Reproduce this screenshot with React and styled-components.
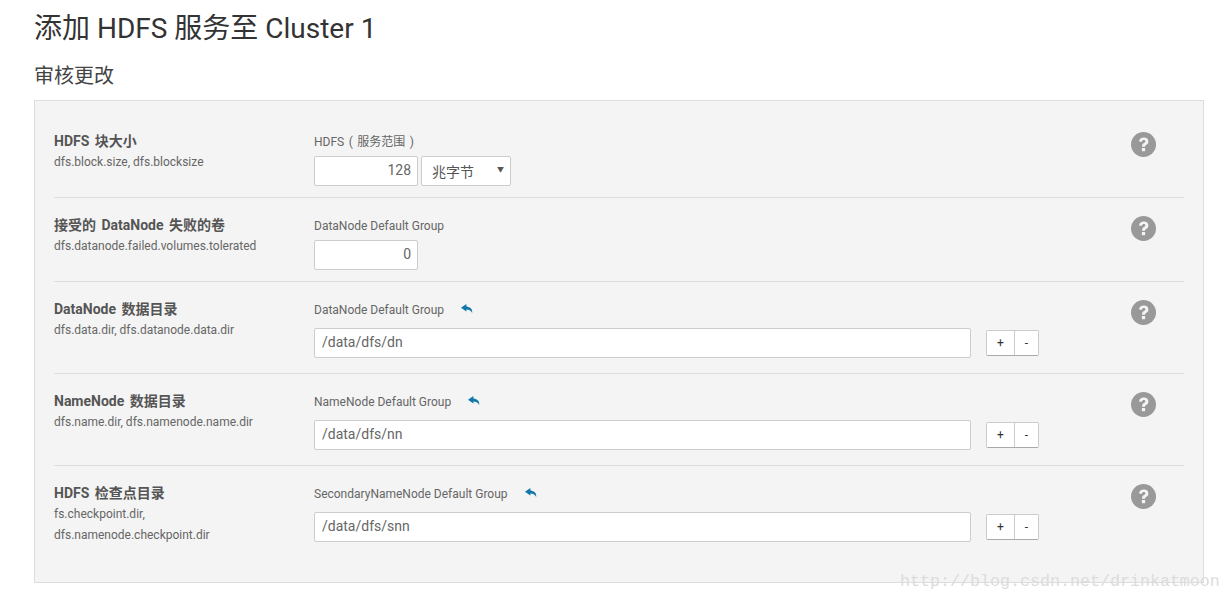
import styled, { createGlobalStyle } from "styled-components";

const GlobalStyle = createGlobalStyle`
  html, body {
    margin: 0;
    padding: 0;
    background: #fff;
  }
  body {
    font-family: Roboto, "Noto Sans CJK SC", sans-serif;
    color: #555;
  }
`;

const Page = styled.div`
  position: relative;
  width: 1231px;
  height: 601px;
  padding: 0 27px 0 34px;
  box-sizing: border-box;
  overflow: hidden;
`;

const Title = styled.h1`
  margin: 0;
  padding-top: 11px;
  height: 46px;
  font-size: 28px;
  line-height: 36px;
  font-weight: 400;
  color: #333;
`;

const Subtitle = styled.h2`
  margin: 0;
  height: 43px;
  font-size: 20px;
  line-height: 38px;
  font-weight: 400;
  color: #444;
`;

const Panel = styled.div`
  height: 483px;
  box-sizing: border-box;
  padding: 13px 19px 0;
  background: #f4f4f4;
  border: 1px solid #ddd;
`;

const Row = styled.div`
  display: grid;
  grid-template-columns: 260px 817px 53px;
  height: ${(p) => p.$height}px;
  box-sizing: border-box;
  padding-top: 17px;
  border-bottom: ${(p) => (p.$last ? "none" : "1px solid #ddd")};
`;

const Name = styled.div`
  font-size: 14px;
  line-height: 20px;
  font-weight: 700;
  word-spacing: 2px;
  color: #555;
`;

const Keys = styled.div`
  margin-top: 1px;
  font-size: 12px;
  line-height: 21px;
  color: #666;
`;

const GroupLabel = styled.div`
  display: flex;
  align-items: center;
  gap: 17px;
  height: 22px;
  font-size: 12px;
  color: #666;
`;

const ScopeLabel = styled(GroupLabel)`
  height: 18px;
  word-spacing: 1.5px;
`;

const Controls = styled.div`
  display: flex;
  align-items: flex-start;
  gap: 3px;
  margin-top: ${(p) => p.$gap}px;
`;

const NumberInput = styled.div`
  width: 104px;
  height: 30px;
  box-sizing: border-box;
  padding-right: 6px;
  background: #fff;
  border: 1px solid #ccc;
  border-radius: 2px;
  font-size: 14px;
  line-height: 26px;
  text-align: right;
  color: #666;
`;

const Select = styled.div`
  display: flex;
  align-items: center;
  justify-content: space-between;
  width: 90px;
  height: 30px;
  box-sizing: border-box;
  padding: 0 6px 0 10px;
  background: #fff;
  border: 1px solid #ccc;
  border-radius: 2px;
  font-size: 14px;
  color: #555;
`;

const Arrow = styled.span`
  font-size: 7px;
  color: #555;
  margin-top: -4px;
`;

const PathInput = styled.div`
  width: 657px;
  height: 30px;
  box-sizing: border-box;
  padding-left: 7px;
  background: #fff;
  border: 1px solid #ccc;
  border-radius: 2px;
  font-size: 14px;
  line-height: 27px;
  color: #666;
`;

const ButtonGroup = styled.div`
  display: flex;
  margin-left: 12px;
  margin-top: 2px;
  background: #fff;
  border: 1px solid #ccc;
  border-bottom-color: #aaa;
  border-radius: 2px;
`;

const GroupButton = styled.button`
  width: ${(p) => p.$width}px;
  height: 24px;
  padding: 0;
  background: #fff;
  border: 0;
  border-left: ${(p) => (p.$divided ? "1px solid #ccc" : "0")};
  font-family: Roboto, sans-serif;
  font-size: 12px;
  color: #333;
`;

const Help = styled.svg`
  display: block;
  width: 25px;
  height: 25px;
  margin-top: 1px;
`;

const Reply = styled.svg`
  display: block;
  width: 12px;
  height: 10px;
  margin-top: -3px;
`;

const Watermark = styled.div`
  position: absolute;
  left: 900px;
  top: 572px;
  font-family: "Liberation Mono", monospace;
  font-size: 16.67px;
  line-height: 20px;
  white-space: nowrap;
  color: #dcdcdc;
`;

const ReplyIcon = () => (
  <Reply viewBox="0 0 12 10">
    <path d="M5.4 0 0 3.8l5.4 3.8V5.4c2.6 0 4.4.8 5.8 3.6.4-3.8-1.8-6-5.8-6.4z" fill="#0f78a6" />
  </Reply>
);

const HelpIcon = () => (
  <Help viewBox="0 0 25 25">
    <circle cx="12.5" cy="12.5" r="12.5" fill="#999" />
    <path
      d="M8 9.6C8.3 6.9 10.2 5.5 12.8 5.5c2.7 0 4.6 1.5 4.6 3.9 0 1.8-1 2.7-2.2 3.5-.9.6-1.2 1-1.2 1.9h-3c0-1.9.5-2.8 1.8-3.7.9-.6 1.5-1 1.5-1.7 0-.8-.6-1.3-1.5-1.3-1 0-1.6.6-1.8 1.7z"
      fill="#f4f4f4"
    />
    <rect x="10.9" y="16" width="3.2" height="3.2" fill="#f4f4f4" />
  </Help>
);

const PathRow = ({ name, keys, group, value, last }) => (
  <Row $height={92} $last={last}>
    <div>
      <Name>{name}</Name>
      <Keys>{keys}</Keys>
    </div>
    <div>
      <GroupLabel>
        {group}
        <ReplyIcon />
      </GroupLabel>
      <Controls $gap={7}>
        <PathInput>{value}</PathInput>
        <ButtonGroup>
          <GroupButton $width={27}>+</GroupButton>
          <GroupButton $width={24} $divided>-</GroupButton>
        </ButtonGroup>
      </Controls>
    </div>
    <HelpIcon />
  </Row>
);

export default function App() {
  return (
    <Page>
      <GlobalStyle />
      <Title>添加 HDFS 服务至 Cluster 1</Title>
      <Subtitle>审核更改</Subtitle>
      <Panel>
        <Row $height={84}>
          <div>
            <Name>HDFS 块大小</Name>
            <Keys>dfs.block.size, dfs.blocksize</Keys>
          </div>
          <div>
            <ScopeLabel>HDFS ( 服务范围 )</ScopeLabel>
            <Controls $gap={7}>
              <NumberInput>128</NumberInput>
              <Select>
                兆字节
                <Arrow>▼</Arrow>
              </Select>
            </Controls>
          </div>
          <HelpIcon />
        </Row>
        <Row $height={84}>
          <div>
            <Name>接受的 DataNode 失败的卷</Name>
            <Keys>dfs.datanode.failed.volumes.tolerated</Keys>
          </div>
          <div>
            <GroupLabel>DataNode Default Group</GroupLabel>
            <Controls $gap={3}>
              <NumberInput>0</NumberInput>
            </Controls>
          </div>
          <HelpIcon />
        </Row>
        <PathRow
          name="DataNode 数据目录"
          keys="dfs.data.dir, dfs.datanode.data.dir"
          group="DataNode Default Group"
          value="/data/dfs/dn"
        />
        <PathRow
          name="NameNode 数据目录"
          keys="dfs.name.dir, dfs.namenode.name.dir"
          group="NameNode Default Group"
          value="/data/dfs/nn"
        />
        <PathRow
          last
          name="HDFS 检查点目录"
          keys={<>fs.checkpoint.dir,<br />dfs.namenode.checkpoint.dir</>}
          group="SecondaryNameNode Default Group"
          value="/data/dfs/snn"
        />
      </Panel>
      <Watermark>http://blog.csdn.net/drinkatmoon</Watermark>
    </Page>
  );
}
